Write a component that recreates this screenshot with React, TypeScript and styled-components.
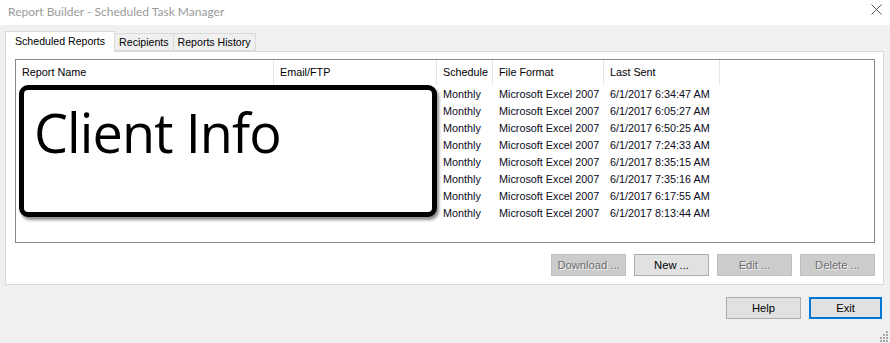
import React from "react";
import styled, { createGlobalStyle } from "styled-components";

const Global = createGlobalStyle`
  html, body { margin: 0; padding: 0; background: #f0f0f0; }
  #root { width: 890px; height: 343px; overflow: hidden; }
  * { box-sizing: border-box; }
`;

const Window = styled.div`
  width: 890px;
  height: 343px;
  background: #f0f0f0;
  display: flex;
  flex-direction: column;
  font-family: "Liberation Sans", Arial, sans-serif;
  font-size: 10.8px;
  color: #000;
  position: relative;
`;

const TitleBar = styled.div`
  height: 25px;
  background: #fff;
  display: flex;
  align-items: center;
  justify-content: space-between;
  padding: 0 8px 2px 8px;
`;

const Title = styled.div`
  font-family: "Lato", "Noto Sans", sans-serif;
  font-size: 12px;
  color: #9a9a9a;
`;

const CloseIcon = styled.svg`
  width: 11px;
  height: 11px;
  margin-top: -4px;
`;

const TabStrip = styled.div`
  display: flex;
  align-items: flex-end;
  height: 26px;
  padding-left: 5px;
  position: relative;
  z-index: 1;
`;

const Tab = styled.div<{ $active?: boolean }>`
  height: ${(p) => (p.$active ? "21px" : "18px")};
  margin-bottom: ${(p) => (p.$active ? "-1px" : "0")};
  padding: 0 ${(p) => (p.$active ? "9px" : "4px")};
  background: ${(p) => (p.$active ? "#fff" : "#f0f0f0")};
  border: 1px solid #d9d9d9;
  border-bottom: ${(p) => (p.$active ? "none" : "1px solid #d9d9d9")};
  border-left: ${(p) => (p.$active ? "1px solid #d9d9d9" : "none")};
  display: flex;
  align-items: center;
  padding-bottom: ${(p) => (p.$active ? "3px" : "0")};
  white-space: nowrap;
  font-size: 10.6px;
`;

const Panel = styled.div`
  margin: 0 6px 0 5px;
  height: 234px;
  background: #fff;
  border: 1px solid #d9d9d9;
  padding: 7px 8px 0 9px;
  display: flex;
  flex-direction: column;
  position: relative;
`;

const ListBox = styled.div`
  height: 184px;
  border: 1px solid #828790;
  background: #fff;
  position: relative;
  overflow: hidden;
`;

const HeaderRow = styled.div`
  display: flex;
  height: 25px;
  align-items: stretch;
`;

const HeaderCell = styled.div<{ $w: number }>`
  width: ${(p) => p.$w}px;
  flex: none;
  padding-left: 6px;
  border-right: 1px solid #e5e5e5;
  display: flex;
  align-items: center;
  padding-bottom: 2px;
  white-space: nowrap;
`;

const Row = styled.div`
  display: flex;
  height: 17px;
  align-items: center;
`;

const Cell = styled.div<{ $w: number }>`
  width: ${(p) => p.$w}px;
  flex: none;
  padding-left: 6px;
  white-space: nowrap;
  color: #0a0a1a;
`;

const Rows = styled.div`
  padding-top: 0px;
`;

const ButtonRow = styled.div`
  display: flex;
  justify-content: flex-end;
  gap: 8px;
  margin-top: 11px;
`;

const Btn = styled.div<{ $disabled?: boolean; $default?: boolean }>`
  width: ${(p) => (p.$default ? "73px" : "75px")};
  height: 22px;
  display: flex;
  align-items: center;
  justify-content: center;
  background: ${(p) => (p.$disabled ? "#cccccc" : "#e1e1e1")};
  border: ${(p) =>
    p.$default ? "2px solid #0078d7" : p.$disabled ? "1px solid #bfbfbf" : "1px solid #adadad"};
  color: ${(p) => (p.$disabled ? "#6e6e6e" : "#000")};
  text-shadow: ${(p) => (p.$disabled ? "1px 1px 0 #f2f2f2" : "none")};
  padding-bottom: 1px;
  font-size: 11.2px;
`;

const Footer = styled.div`
  display: flex;
  justify-content: flex-end;
  gap: 8px;
  padding: 12px 8px 0 0;
`;

const Overlay = styled.div`
  position: absolute;
  left: 19px;
  top: 85px;
  width: 418px;
  height: 132px;
  border: 5px solid #000;
  border-radius: 9px;
  background: #fff;
  box-shadow: 2px 3px 3px rgba(0, 0, 0, 0.45);
  padding: 15px 0 0 10px;
  font-family: "Open Sans", "Noto Sans", sans-serif;
  font-size: 54px;
  line-height: 1;
  letter-spacing: -0.9px;
  color: #000;
  z-index: 5;
`;

const Grip = styled.svg`
  position: absolute;
  right: 1px;
  bottom: 1px;
  width: 10px;
  height: 12px;
`;

const cols = [258, 163, 56, 111, 116];
const headers = ["Report Name", "Email/FTP", "Schedule", "File Format", "Last Sent"];
const times = [
  "6:34:47 AM",
  "6:05:27 AM",
  "6:50:25 AM",
  "7:24:33 AM",
  "8:35:15 AM",
  "7:35:16 AM",
  "6:17:55 AM",
  "8:13:44 AM",
];

const gripDots: [number, number][] = [
  [8, 2],
  [8, 5],
  [5, 5],
  [8, 8],
  [5, 8],
  [2, 8],
  [8, 11],
  [5, 11],
  [2, 11],
];

export default function App() {
  return (
    <>
      <Global />
      <Window>
        <TitleBar>
          <Title>Report Builder - Scheduled Task Manager</Title>
          <CloseIcon viewBox="0 0 11 11">
            <path d="M0.5 0.5 L10.5 10.5 M10.5 0.5 L0.5 10.5" stroke="#555" strokeWidth="1" />
          </CloseIcon>
        </TitleBar>
        <TabStrip>
          <Tab $active>Scheduled Reports</Tab>
          <Tab>Recipients</Tab>
          <Tab>Reports History</Tab>
        </TabStrip>
        <Panel>
          <ListBox>
            <HeaderRow>
              {headers.map((h, i) => (
                <HeaderCell key={h} $w={cols[i]}>
                  {h}
                </HeaderCell>
              ))}
            </HeaderRow>
            <Rows>
              {times.map((t) => (
                <Row key={t}>
                  <Cell $w={cols[0]} />
                  <Cell $w={cols[1]} />
                  <Cell $w={cols[2]}>Monthly</Cell>
                  <Cell $w={cols[3]}>Microsoft Excel 2007</Cell>
                  <Cell $w={cols[4]}>6/1/2017 {t}</Cell>
                </Row>
              ))}
            </Rows>
          </ListBox>
          <ButtonRow>
            <Btn $disabled>Download ...</Btn>
            <Btn>New ...</Btn>
            <Btn $disabled>Edit ...</Btn>
            <Btn $disabled>Delete ...</Btn>
          </ButtonRow>
        </Panel>
        <Footer>
          <Btn>Help</Btn>
          <Btn $default>Exit</Btn>
        </Footer>
        <Overlay>Client Info</Overlay>
        <Grip viewBox="0 0 10 12">
          {gripDots.map(([x, y], i) => (
            <rect key={i} x={x - 1} y={y - 1} width="2" height="2" fill="#a8a8a8" />
          ))}
        </Grip>
      </Window>
    </>
  );
}
